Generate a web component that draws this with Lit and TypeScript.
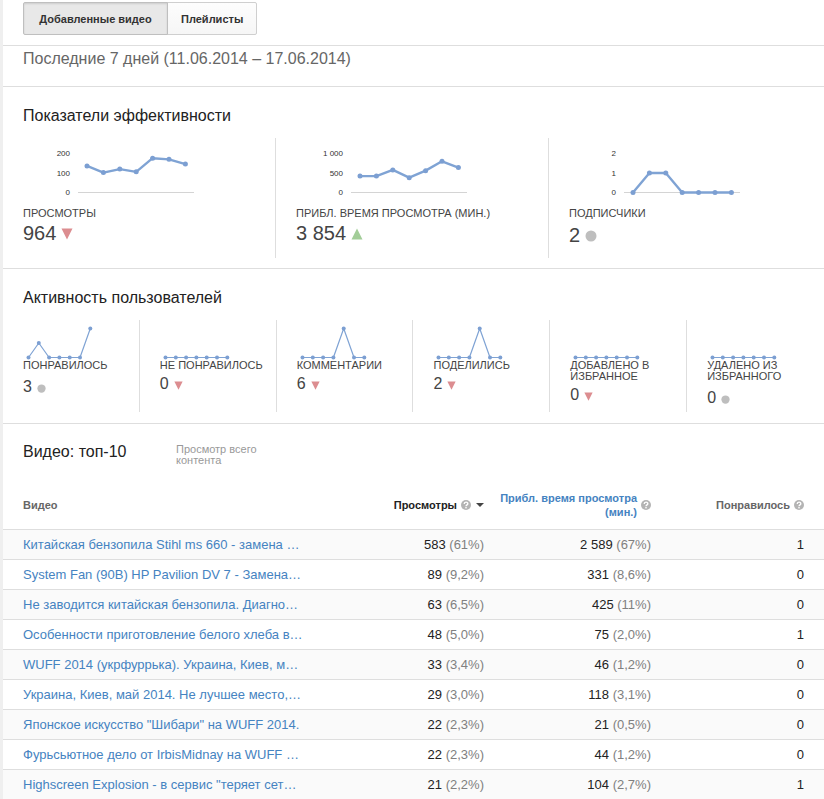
import { LitElement, html, svg, css } from "lit";
import { customElement, property, state } from "lit/decorators.js";

type Trend = "up" | "down" | "flat";

interface Metric {
  label: string;
  value: string;
  trend: Trend;
  ticks?: string[];
  points: number[];
}

interface VideoRow {
  title: string;
  views: string;
  viewsShare: string;
  minutes: string;
  minutesShare: string;
  likes: string;
}

// Points are shares of the chart's full scale, one per day.
const METRICS: Metric[] = [
  { label: "Просмотры", value: "964", trend: "down", ticks: ["200", "100", "0"], points: [0.68, 0.51, 0.6, 0.53, 0.88, 0.85, 0.73] },
  { label: "Прибл. время просмотра (мин.)", value: "3 854", trend: "up", ticks: ["1 000", "500", "0"], points: [0.42, 0.42, 0.58, 0.38, 0.56, 0.8, 0.64] },
  { label: "Подписчики", value: "2", trend: "flat", ticks: ["2", "1", "0"], points: [0, 0.5, 0.5, 0, 0, 0, 0] },
];

const ACTIVITY: Metric[] = [
  { label: "Понравилось", value: "3", trend: "flat", points: [0, 0.5, 0, 0, 0, 0, 1] },
  { label: "Не понравилось", value: "0", trend: "down", points: [0, 0, 0, 0, 0, 0, 0] },
  { label: "Комментарии", value: "6", trend: "down", points: [0, 0, 0, 0, 1, 0, 0] },
  { label: "Поделились", value: "2", trend: "down", points: [0, 0, 0, 0, 1, 0, 0] },
  { label: "Добавлено в избранное", value: "0", trend: "down", points: [0, 0, 0, 0, 0, 0, 0] },
  { label: "Удалено из избранного", value: "0", trend: "flat", points: [0, 0, 0, 0, 0, 0, 0] },
];

const VIDEOS: VideoRow[] = [
  { title: "Китайская бензопила Stihl ms 660 - замена …", views: "583", viewsShare: "61%", minutes: "2 589", minutesShare: "67%", likes: "1" },
  { title: "System Fan (90B) HP Pavilion DV 7 - Замена…", views: "89", viewsShare: "9,2%", minutes: "331", minutesShare: "8,6%", likes: "0" },
  { title: "Не заводится китайская бензопила. Диагно…", views: "63", viewsShare: "6,5%", minutes: "425", minutesShare: "11%", likes: "0" },
  { title: "Особенности приготовление белого хлеба в…", views: "48", viewsShare: "5,0%", minutes: "75", minutesShare: "2,0%", likes: "1" },
  { title: "WUFF 2014 (укрфуррька). Украина, Киев, м…", views: "33", viewsShare: "3,4%", minutes: "46", minutesShare: "1,2%", likes: "0" },
  { title: "Украина, Киев, май 2014. Не лучшее место,…", views: "29", viewsShare: "3,0%", minutes: "118", minutesShare: "3,1%", likes: "0" },
  { title: "Японское искусство \"Шибари\" на WUFF 2014.", views: "22", viewsShare: "2,3%", minutes: "21", minutesShare: "0,5%", likes: "0" },
  { title: "Фурьсьютное дело от IrbisMidnay на WUFF …", views: "22", viewsShare: "2,3%", minutes: "44", minutesShare: "1,2%", likes: "0" },
  { title: "Highscreen Explosion - в сервис \"теряет сет…", views: "21", viewsShare: "2,2%", minutes: "104", minutesShare: "2,7%", likes: "1" },
];

@customElement("metric-card")
class MetricCard extends LitElement {
  @property({ attribute: false }) metric!: Metric;
  @property({ type: Boolean, reflect: true }) compact = false;

  static styles = css`
    :host {
      display: block;
      box-sizing: border-box;
      height: 120px;
      padding-left: 20px;
      border-right: 1px solid #dedede;
      color: #444;
    }
    :host(:last-child) {
      border-right-color: transparent;
    }
    :host([compact]) {
      height: 92px;
    }
    svg {
      display: block;
    }
    .chart {
      margin-bottom: 10px;
    }
    :host([compact]) .chart {
      margin-bottom: 0;
    }
    .line {
      fill: none;
      stroke: #7fa3d4;
      stroke-width: 2.4;
      stroke-linejoin: round;
    }
    :host([compact]) .line {
      stroke-width: 1.2;
    }
    .dot {
      fill: #7c9fd2;
    }
    .axis {
      stroke: #d4d4d4;
    }
    .tick {
      font-size: 8px;
      fill: #333;
      text-anchor: end;
    }
    .label {
      font-size: 11px;
      line-height: 11px;
      text-transform: uppercase;
    }
    :host([compact]) .label {
      max-width: 110px;
    }
    .value {
      display: flex;
      align-items: center;
      gap: 5px;
      margin-top: 2px;
      font-size: 20px;
      line-height: 24px;
    }
    :host([compact]) .value {
      font-size: 16px;
      line-height: 22px;
    }
    .value.flat {
      margin-top: 4px;
    }
    :host([compact]) .value.flat {
      margin-top: 5px;
    }
    .trend {
      margin-top: 2px;
    }
    .up {
      fill: #a2cd98;
    }
    .down {
      fill: #dc8d90;
    }
    .flat {
      fill: #bebebe;
    }
  `;

  private chart() {
    const small = this.compact;
    const x0 = small ? 5.5 : 64;
    const step = small ? 10.3 : 16.4;
    const base = small ? 37.5 : 54.5;
    const range = small ? 29 : 39;
    const xy = this.metric.points.map((p, i) => [x0 + i * step, base - p * range]);
    return html`<svg class="chart" width=${small ? 90 : 180} height=${small ? 40 : 60} aria-hidden="true">
      ${small
        ? null
        : svg`<line class="axis" x1="55" x2="171" y1="54.5" y2="54.5"></line>
          ${this.metric.ticks?.map((t, i) => svg`<text class="tick" x="47" y=${18 + i * 20 - (i === 2 ? 1 : 0)}>${t}</text>`)}`}
      <polyline class="line" points=${xy.map((p) => p.join(",")).join(" ")}></polyline>
      ${xy.map(([x, y]) => svg`<circle class="dot" cx=${x} cy=${y} r=${small ? 2 : 2.5}></circle>`)}
    </svg>`;
  }

  private trend() {
    const size = this.compact ? 9 : 12;
    const shape = {
      up: svg`<path d="M6 0.5 L11.5 11.5 H0.5 Z"></path>`,
      down: svg`<path d="M0.5 0.5 H11.5 L6 11.5 Z"></path>`,
      flat: svg`<circle cx="6" cy="6" r="5.5"></circle>`,
    }[this.metric.trend];
    return html`<svg class="trend ${this.metric.trend}" width=${size} height=${size} viewBox="0 0 12 12" aria-hidden="true">${shape}</svg>`;
  }

  render() {
    return html`${this.chart()}
      <div class="label">${this.metric.label}</div>
      <div class="value ${this.metric.trend}"><span>${this.metric.value}</span>${this.trend()}</div>`;
  }
}

@customElement("app-root")
class AppRoot extends LitElement {
  @state() private tab = 0;

  static styles = css`
    :host {
      display: block;
      border-left: 3px solid #efefef;
      background: #fff;
      color: #222;
      font-family: "Liberation Sans", Arial, sans-serif;
      font-size: 13px;
    }
    button {
      font: inherit;
      color: inherit;
      cursor: pointer;
    }
    a {
      color: #4583c1;
      text-decoration: none;
    }
    .tabs {
      display: flex;
      padding: 2px 20px 10px;
      border-bottom: 1px solid #dedede;
    }
    .tab {
      height: 33px;
      padding: 0 13px;
      border: 1px solid #cfcfcf;
      border-radius: 0 2px 2px 0;
      background: linear-gradient(#fdfdfd, #f6f6f6);
      font-size: 11px;
      font-weight: bold;
      color: #333;
    }
    .tab + .tab {
      margin-left: -1px;
    }
    .tab:first-child {
      min-width: 145px;
      border-radius: 2px 0 0 2px;
    }
    .tab.active {
      border-color: #bfbfbf;
      background: #e8e8e8;
      box-shadow: inset 0 1px 2px rgba(0, 0, 0, 0.12);
      z-index: 1;
    }
    .period {
      margin: 0;
      padding: 3px 20px 17px;
      border-bottom: 1px solid #dedede;
      font-size: 16px;
      line-height: 20px;
      color: #666;
    }
    h2 {
      margin: 0;
      font-size: 16px;
      font-weight: normal;
      line-height: 20px;
    }
    .section {
      padding: 19px 0 10px;
      border-bottom: 1px solid #dedede;
    }
    .section h2 {
      padding: 0 20px;
    }
    .cards {
      display: grid;
      grid-template-columns: repeat(3, minmax(0, 1fr));
      margin: 12px 2px 0 0;
    }
    .cards.six {
      grid-template-columns: repeat(6, minmax(0, 1fr));
      margin-right: 0;
    }
    .section.activity {
      padding-bottom: 11px;
    }
    .top {
      display: grid;
      grid-template-columns: 153px 100px;
      padding: 18px 20px 14px;
    }
    .all {
      padding-top: 2px;
      font-size: 11px;
      line-height: 11px;
      color: #999;
    }
    table {
      width: 100%;
      border-collapse: collapse;
      table-layout: fixed;
    }
    .c-views {
      width: 130px;
    }
    .c-minutes {
      width: 167px;
    }
    .c-likes {
      width: 173px;
    }
    th {
      box-sizing: border-box;
      height: 49px;
      padding: 2px 0 0;
      border-bottom: 1px solid #dedede;
      font-size: 11px;
      line-height: 14px;
      color: #666;
      text-align: right;
    }
    td {
      box-sizing: border-box;
      height: 30px;
      padding: 0;
      border-bottom: 1px solid #dedede;
      text-align: right;
      white-space: nowrap;
    }
    th:first-child,
    td:first-child {
      padding-left: 20px;
      text-align: left;
    }
    th:last-child,
    td:last-child {
      padding-right: 20px;
    }
    tbody tr:nth-child(odd) {
      background: #fafafa;
    }
    tbody tr:last-child td {
      border-bottom: 0;
    }
    .share {
      color: #808080;
    }
    .sort {
      display: flex;
      align-items: center;
      justify-content: flex-end;
      gap: 4px;
      width: 100%;
      padding: 0;
      border: 0;
      background: none;
      text-align: right;
    }
    .sort svg {
      flex: none;
    }
    .sorted {
      color: #222;
    }
    .linked {
      color: #4583c1;
    }
    .caret {
      margin-left: 1px;
    }
    .disc {
      fill: #b4b4b4;
    }
    .hook {
      fill: none;
      stroke: #fff;
      stroke-width: 1.4;
    }
    .point {
      fill: #fff;
    }
  `;

  private help() {
    return html`<svg width="10" height="10" viewBox="0 0 10 10" aria-hidden="true">
      <circle class="disc" cx="5" cy="5" r="5"></circle>
      <path class="hook" d="M3.2 4 C3.2 1.6 6.8 1.6 6.8 3.7 C6.8 4.9 5 4.8 5 6.3"></path>
      <rect class="point" x="4.3" y="7" width="1.4" height="1.4"></rect>
    </svg>`;
  }

  render() {
    return html`
      <nav class="tabs">
        ${["Добавленные видео", "Плейлисты"].map(
          (name, i) => html`<button type="button" class="tab ${this.tab === i ? "active" : ""}" @click=${() => (this.tab = i)}>${name}</button>`
        )}
      </nav>
      <p class="period">Последние 7 дней (11.06.2014 – 17.06.2014)</p>
      <section class="section">
        <h2>Показатели эффективности</h2>
        <div class="cards">${METRICS.map((m) => html`<metric-card .metric=${m}></metric-card>`)}</div>
      </section>
      <section class="section activity">
        <h2>Активность пользователей</h2>
        <div class="cards six">${ACTIVITY.map((m) => html`<metric-card compact .metric=${m}></metric-card>`)}</div>
      </section>
      <section>
        <div class="top">
          <h2>Видео: топ-10</h2>
          <a class="all" href="#all">Просмотр всего контента</a>
        </div>
        <table>
          <colgroup>
            <col />
            <col class="c-views" />
            <col class="c-minutes" />
            <col class="c-likes" />
          </colgroup>
          <thead>
            <tr>
              <th scope="col">Видео</th>
              <th scope="col" aria-sort="descending">
                <button type="button" class="sort sorted">
                  <span>Просмотры</span>${this.help()}
                  <svg class="caret" width="8" height="4" viewBox="0 0 8 4" aria-hidden="true"><path fill="#444" d="M0 0 H8 L4 4 Z"></path></svg>
                </button>
              </th>
              <th scope="col">
                <button type="button" class="sort linked"><span>Прибл. время просмотра (мин.)</span>${this.help()}</button>
              </th>
              <th scope="col">
                <button type="button" class="sort"><span>Понравилось</span>${this.help()}</button>
              </th>
            </tr>
          </thead>
          <tbody>
            ${VIDEOS.map(
              (v) => html`<tr>
                <td><a href="#video">${v.title}</a></td>
                <td>${v.views} <span class="share">(${v.viewsShare})</span></td>
                <td>${v.minutes} <span class="share">(${v.minutesShare})</span></td>
                <td>${v.likes}</td>
              </tr>`
            )}
          </tbody>
        </table>
      </section>
    `;
  }
}
